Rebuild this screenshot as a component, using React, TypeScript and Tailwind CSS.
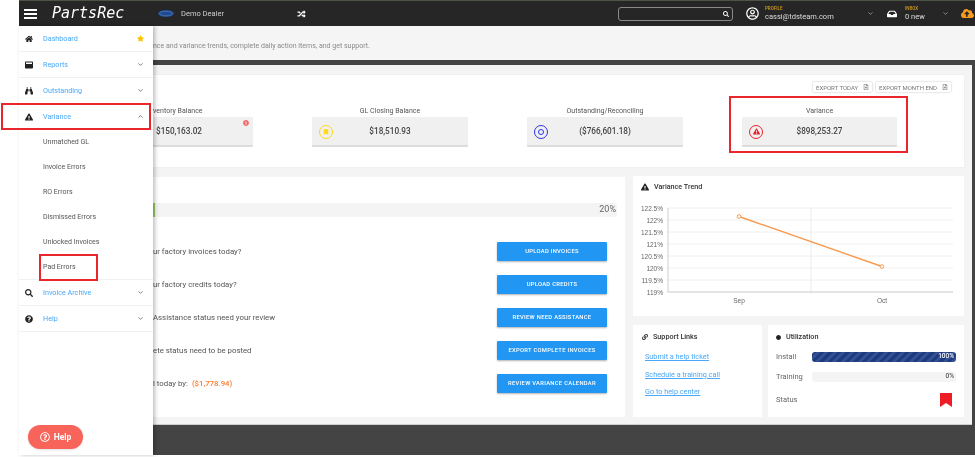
import { ChevronDown, ChevronUp } from "lucide-react";
import {
  FaBinoculars,
  FaBookmark,
  FaCircle,
  FaCloudUploadAlt,
  FaExclamationCircle,
  FaExclamationTriangle,
  FaHome,
  FaInbox,
  FaLink,
  FaQuestionCircle,
  FaRandom,
  FaRegFileAlt,
  FaRegQuestionCircle,
  FaRegUserCircle,
  FaSearch,
  FaStar,
  FaWindowMaximize,
} from "react-icons/fa";

const subItems = ["Unmatched GL", "Invoice Errors", "RO Errors", "Dismissed Errors", "Unlocked Invoices", "Pad Errors"];

const actions = [
  { text: "ur factory invoices today?", button: "Upload Invoices" },
  { text: "ur factory credits today?", button: "Upload Credits" },
  { text: "Assistance status need your review", button: "Review Need Assistance" },
  { text: "ete status need to be posted", button: "Export Complete Invoices" },
  { text: "l today by:", button: "Review Variance Calendar", amount: "($1,778.94)" },
];

const NavRow = ({ icon, label, open, star }: { icon: React.ReactNode; label: string; open?: boolean; star?: boolean }) => (
  <div className="flex h-[26px] items-center border-b border-[#f1f1f1] pr-[9px]">
    <span className="flex w-[24px] justify-start pl-[6px] text-[8px] text-[#222]">{icon}</span>
    <a href="#" className="flex-1 pt-[1px] text-[7.2px] text-[#4aa8f7]">
      {label}
    </a>
    {star ? (
      <FaStar className="h-[7px] w-[7px] text-[#ffc400]" />
    ) : open ? (
      <ChevronUp className="h-[7px] w-[7px] text-[#555]" strokeWidth={2.5} />
    ) : (
      <ChevronDown className="h-[7px] w-[7px] text-[#555]" strokeWidth={2.5} />
    )}
  </div>
);

const Sidebar = () => (
  <aside className="relative z-10 flex h-full w-[134px] flex-none flex-col bg-white shadow-[2px_0_4px_rgba(0,0,0,0.25)]">
    <NavRow icon={<FaHome />} label="Dashboard" star />
    <NavRow icon={<FaWindowMaximize />} label="Reports" />
    <NavRow icon={<FaBinoculars />} label="Outstanding" />
    <NavRow icon={<FaExclamationTriangle />} label="Variance" open />
    <div className="-mt-[1px] flex h-[151px] flex-none flex-col border-b border-[#f1f1f1]">
      {subItems.map((item) => (
        <div key={item} className="flex h-[25px] flex-none items-center pt-[1px] pl-[24px] text-[7px] text-[#555]">
          {item}
        </div>
      ))}
    </div>
    <NavRow icon={<FaSearch />} label="Invoice Archive" />
    <NavRow icon={<FaQuestionCircle />} label="Help" />
    <button className="mt-auto mb-[6px] ml-[9px] flex h-[24px] w-[55px] items-center justify-center gap-[4px] rounded-full bg-[#f8635a] text-[8.5px] font-bold text-white shadow-sm">
      <FaRegQuestionCircle className="h-[10px] w-[10px]" />
      Help
    </button>
  </aside>
);

const Header = () => (
  <header className="flex h-[26px] flex-none items-center border-t border-[#4b5446] bg-[#262626] text-white">
    <div className="ml-[5px] flex w-[13px] flex-col gap-[2px]">
      <span className="h-[2px] bg-white" />
      <span className="h-[2px] bg-white" />
      <span className="h-[2px] bg-white" />
    </div>
    <span className="ml-[15px] w-[106px] font-['DejaVu_Sans_Mono',monospace] text-[15px] italic">PartsRec</span>
    <svg viewBox="0 0 16 7" className="h-[7px] w-[16px] flex-none">
      <ellipse cx="8" cy="3.5" rx="8" ry="3.5" fill="#1f4a93" />
      <ellipse cx="8" cy="3.5" rx="6.5" ry="2.3" fill="none" stroke="#6f8fc0" strokeWidth="0.5" />
    </svg>
    <span className="ml-[7px] w-[116px] text-[7.5px] text-[#cfcfcf]">Demo Dealer</span>
    <FaRandom className="h-[8px] w-[9px] flex-none" />
    <div className="ml-[312px] flex h-[14px] w-[115px] flex-none items-center justify-end rounded-[3px] border border-[#8a8a8a] pr-[3px]">
      <FaSearch className="h-[6px] w-[6px]" />
    </div>
    <FaRegUserCircle className="ml-[13px] h-[13px] w-[13px] flex-none" />
    <div className="ml-[6px] flex w-[102px] flex-none flex-col leading-none">
      <span className="text-[4.5px] font-medium text-[#d29a1c]">PROFILE</span>
      <span className="mt-[1px] text-[7.5px] text-[#ddd]">cassi@tdsteam.com</span>
    </div>
    <ChevronDown className="h-[7px] w-[7px] flex-none text-[#aaa]" strokeWidth={2.5} />
    <FaInbox className="ml-[13px] h-[10px] w-[10px] flex-none" />
    <div className="ml-[8px] flex w-[37px] flex-none flex-col leading-none">
      <span className="text-[4.5px] font-medium text-[#d29a1c]">INBOX</span>
      <span className="mt-[1px] text-[7.5px] text-[#ddd]">0 new</span>
    </div>
    <ChevronDown className="h-[7px] w-[7px] flex-none text-[#aaa]" strokeWidth={2.5} />
    <FaCloudUploadAlt className="ml-[12px] h-[13px] w-[13px] flex-none text-[#f59a1e]" />
  </header>
);

const ExportButton = ({ label, className }: { label: string; className: string }) => (
  <button className={`flex h-[10px] items-center justify-between rounded-[1px] bg-white px-[3px] text-[6px] text-[#777] shadow-[0_0_2px_rgba(0,0,0,0.3)] ${className}`}>
    {label}
    <FaRegFileAlt className="h-[6px] w-[6px]" />
  </button>
);

const Stat = ({ title, value, icon, className, titleClass, boxClass }: { title: string; value: string; icon?: React.ReactNode; className: string; titleClass?: string; boxClass?: string }) => (
  <div className={className}>
    <div className={`h-[10px] text-[7px] leading-[10px] text-[#555] ${titleClass ?? "text-center"}`}>{title}</div>
    <div className={`relative mt-[1px] flex h-[30px] items-center rounded-[1px] border-b-2 border-[#dcdcdc] bg-[#f0f0f0] pt-[1px] text-[8.2px] font-medium text-[#444] ${boxClass ?? "justify-center"}`}>
      {icon}
      {value}
    </div>
  </div>
);

const SummaryCard = () => (
  <section className="mr-[8px] h-[92px] bg-white pt-[7px] shadow-[0_0_1px_rgba(0,0,0,0.1)]">
    <div className="flex justify-end gap-[4px] pr-[13px]">
      <ExportButton label="EXPORT TODAY" className="w-[59px]" />
      <ExportButton label="EXPORT MONTH END" className="w-[75px]" />
    </div>
    <div className="mt-[14px] flex gap-[59px]">
      <Stat
        title="ventory Balance"
        titleClass="text-left"
        boxClass="pl-[3px]"
        value="$150,163.02"
        className="w-[100px]"
        icon={<FaExclamationCircle className="absolute top-[3px] right-[4px] h-[6px] w-[6px] text-[#ee6b6b]" />}
      />
      <Stat
        title="GL Closing Balance"
        value="$18,510.93"
        className="w-[156px]"
        icon={
          <span className="absolute left-[7px] flex h-[14px] w-[14px] items-center justify-center rounded-full border-[1.5px] border-[#ffd91f]">
            <FaBookmark className="h-[6px] w-[6px] text-[#ffd91f]" />
          </span>
        }
      />
      <Stat
        title="Outstanding/Reconciling"
        value="($766,601.18)"
        className="w-[156px]"
        icon={
          <span className="absolute left-[7px] flex h-[14px] w-[14px] items-center justify-center rounded-full border-[1.5px] border-[#2b35e8]">
            <span className="h-[6px] w-[6px] rounded-full border-[1.5px] border-[#2b35e8]" />
          </span>
        }
      />
      <Stat
        title="Variance"
        value="$898,253.27"
        className="w-[155px]"
        icon={
          <span className="absolute left-[7px] flex h-[14px] w-[14px] items-center justify-center rounded-full border-[1.5px] border-[#f0202a]">
            <FaExclamationTriangle className="h-[7px] w-[7px] text-[#f0202a]" />
          </span>
        }
      />
    </div>
  </section>
);

const ActionsCard = () => (
  <section className="h-[240px] w-[472px] flex-none bg-white pt-[26px] pr-[8px]">
    <div className="flex h-[14px] items-center justify-between rounded-r-[3px] bg-[#f4f4f4] pr-[1px]">
      <span className="h-full w-[2px] bg-[#9ccc65]" />
      <span className="text-[9px] text-[#666]">20%</span>
    </div>
    <div className="mt-[18px] flex flex-col pr-[10px]">
      {actions.map((row) => (
        <div key={row.button} className="flex h-[33px] items-center justify-between">
          <span className="text-[7.8px] text-[#555]">
            {row.text}
            {row.amount && <span className="ml-[4px] font-medium text-[#ff7a2d]">{row.amount}</span>}
          </span>
          <button className="h-[19px] w-[110px] rounded-[1px] bg-[#2196f3] text-[5.8px] font-medium tracking-[0.3px] text-white uppercase shadow-[0_1px_2px_rgba(0,0,0,0.3)]">
            {row.button}
          </button>
        </div>
      ))}
    </div>
  </section>
);

const yLabels = ["122.5%", "122%", "121.5%", "121%", "120.5%", "120%", "119.5%", "119%"];

const TrendChart = () => (
  <svg viewBox="0 0 331 112" className="mt-[3px] h-[112px] w-[331px]">
    {yLabels.map((label, i) => (
      <g key={label}>
        <line x1="33" x2="320" y1={7 + i * 12} y2={7 + i * 12} stroke="#f0f0f0" strokeWidth="1" />
        <text x="30" y={9.5 + i * 12} textAnchor="end" fontSize="6.5" fill="#666" fontFamily="Liberation Sans, sans-serif">
          {label}
        </text>
      </g>
    ))}
    <line x1="35" x2="35" y1="7" y2="91" stroke="#d0d0d0" />
    <line x1="178" x2="178" y1="7" y2="93" stroke="#ececec" />
    <line x1="35" x2="320" y1="91" y2="91" stroke="#d0d0d0" />
    <polyline points="106,15.5 249,65.5" fill="none" stroke="#f79a4f" strokeWidth="1.4" />
    <circle cx="106" cy="15.5" r="1.8" fill="#fff" stroke="#f79a4f" strokeWidth="1" />
    <circle cx="249" cy="65.5" r="1.8" fill="#fff" stroke="#f79a4f" strokeWidth="1" />
    <text x="106" y="102" textAnchor="middle" fontSize="6.5" fill="#666" fontFamily="Liberation Sans, sans-serif">
      Sep
    </text>
    <text x="249" y="102" textAnchor="middle" fontSize="6.5" fill="#666" fontFamily="Liberation Sans, sans-serif">
      Oct
    </text>
  </svg>
);

const TrendCard = () => (
  <section className="h-[140px] bg-white">
    <div className="flex h-[22px] items-center pl-[8px] text-[7.2px] font-medium text-[#333]">
      <FaExclamationTriangle className="mr-[5px] h-[8px] w-[8px] text-[#222]" />
      Variance Trend
    </div>
    <TrendChart />
  </section>
);

const SupportCard = () => (
  <section className="h-[92px] w-[129px] flex-none bg-white pl-[12px]">
    <div className="flex h-[24px] items-center text-[7.2px] font-medium text-[#333]">
      <FaLink className="mr-[5px] ml-[-3px] h-[6px] w-[6px] text-[#333]" />
      Support Links
    </div>
    <div className="mt-[3px] flex flex-col gap-[7.7px] text-[7.3px] leading-[10px] text-[#4aa8f7] underline">
      <a href="#">Submit a help ticket</a>
      <a href="#">Schedule a training call</a>
      <a href="#">Go to help center</a>
    </div>
  </section>
);

const UtilizationCard = () => (
  <section className="h-[92px] w-[196px] flex-none bg-white pr-[8px] pl-[8px]">
    <div className="flex h-[24px] items-center text-[7.2px] font-medium text-[#333]">
      <FaCircle className="mr-[5px] h-[5px] w-[5px] text-[#222]" />
      Utilization
    </div>
    <div className="mt-[3px] flex h-[10px] items-center text-[7.5px] text-[#666]">
      <span className="w-[36px]">Install</span>
      <div className="flex h-[10px] flex-1 items-center justify-end rounded-[3px] bg-[repeating-linear-gradient(135deg,#1e3a80_0,#1e3a80_3px,#33508f_3px,#33508f_6px)] pr-[2px] text-[6.5px] font-medium text-white">
        100%
      </div>
    </div>
    <div className="mt-[10px] flex h-[10px] items-center text-[7.5px] text-[#666]">
      <span className="w-[36px]">Training</span>
      <div className="flex h-[10px] flex-1 items-center justify-end rounded-[3px] bg-[#f4f4f4] pr-[2px] text-[6.5px] font-medium text-[#555]">
        0%
      </div>
    </div>
    <div className="mt-[10px] flex h-[16px] items-center justify-between pr-[4px] text-[7.5px] text-[#666]">
      <span>Status</span>
      <svg viewBox="0 0 12 14" className="h-[14px] w-[12px]">
        <polygon points="0,0 12,0 12,14 6,10 0,14" fill="#ee1c25" />
      </svg>
    </div>
  </section>
);

export default function App() {
  return (
    <div className="relative flex h-[457px] w-[975px] overflow-hidden bg-white font-['Roboto',sans-serif] blur-[0.5px]">
      <div className="w-[19px] flex-none" />
      <div className="flex h-[455px] w-[956px] flex-none flex-col">
        <Header />
        <div className="flex min-h-0 flex-1">
          <Sidebar />
          <main className="flex min-w-0 flex-1 flex-col bg-[#444444]">
            <div className="h-[34px] flex-none bg-[#f5f5f5] pt-[15px] text-[7px] leading-[10px] text-[#8a8a8a]">
              nce and variance trends, complete daily action items, and get support.
            </div>
            <div className="mt-[5px] mr-[3px] flex h-[360px] flex-none flex-col gap-[10px] border-b border-[#cfcfcf] bg-[#f4f4f4] pt-[10px]">
              <SummaryCard />
              <div className="flex gap-[8px]">
                <ActionsCard />
                <div className="-mt-[1px] flex w-[331px] flex-none flex-col gap-[9px]">
                  <TrendCard />
                  <div className="flex gap-[6px]">
                    <SupportCard />
                    <UtilizationCard />
                  </div>
                </div>
              </div>
            </div>
          </main>
        </div>
      </div>
      {/* red annotation boxes drawn over the screenshot */}
      <div className="absolute top-[103px] left-[1px] z-20 h-[27px] w-[150px] border-2 border-[#e8262c]" />
      <div className="absolute top-[254px] left-[39px] z-20 h-[27px] w-[59px] border-2 border-[#e8262c]" />
      <div className="absolute top-[96px] left-[729px] z-20 h-[57px] w-[179px] border-2 border-[#e8262c]" />
    </div>
  );
}
